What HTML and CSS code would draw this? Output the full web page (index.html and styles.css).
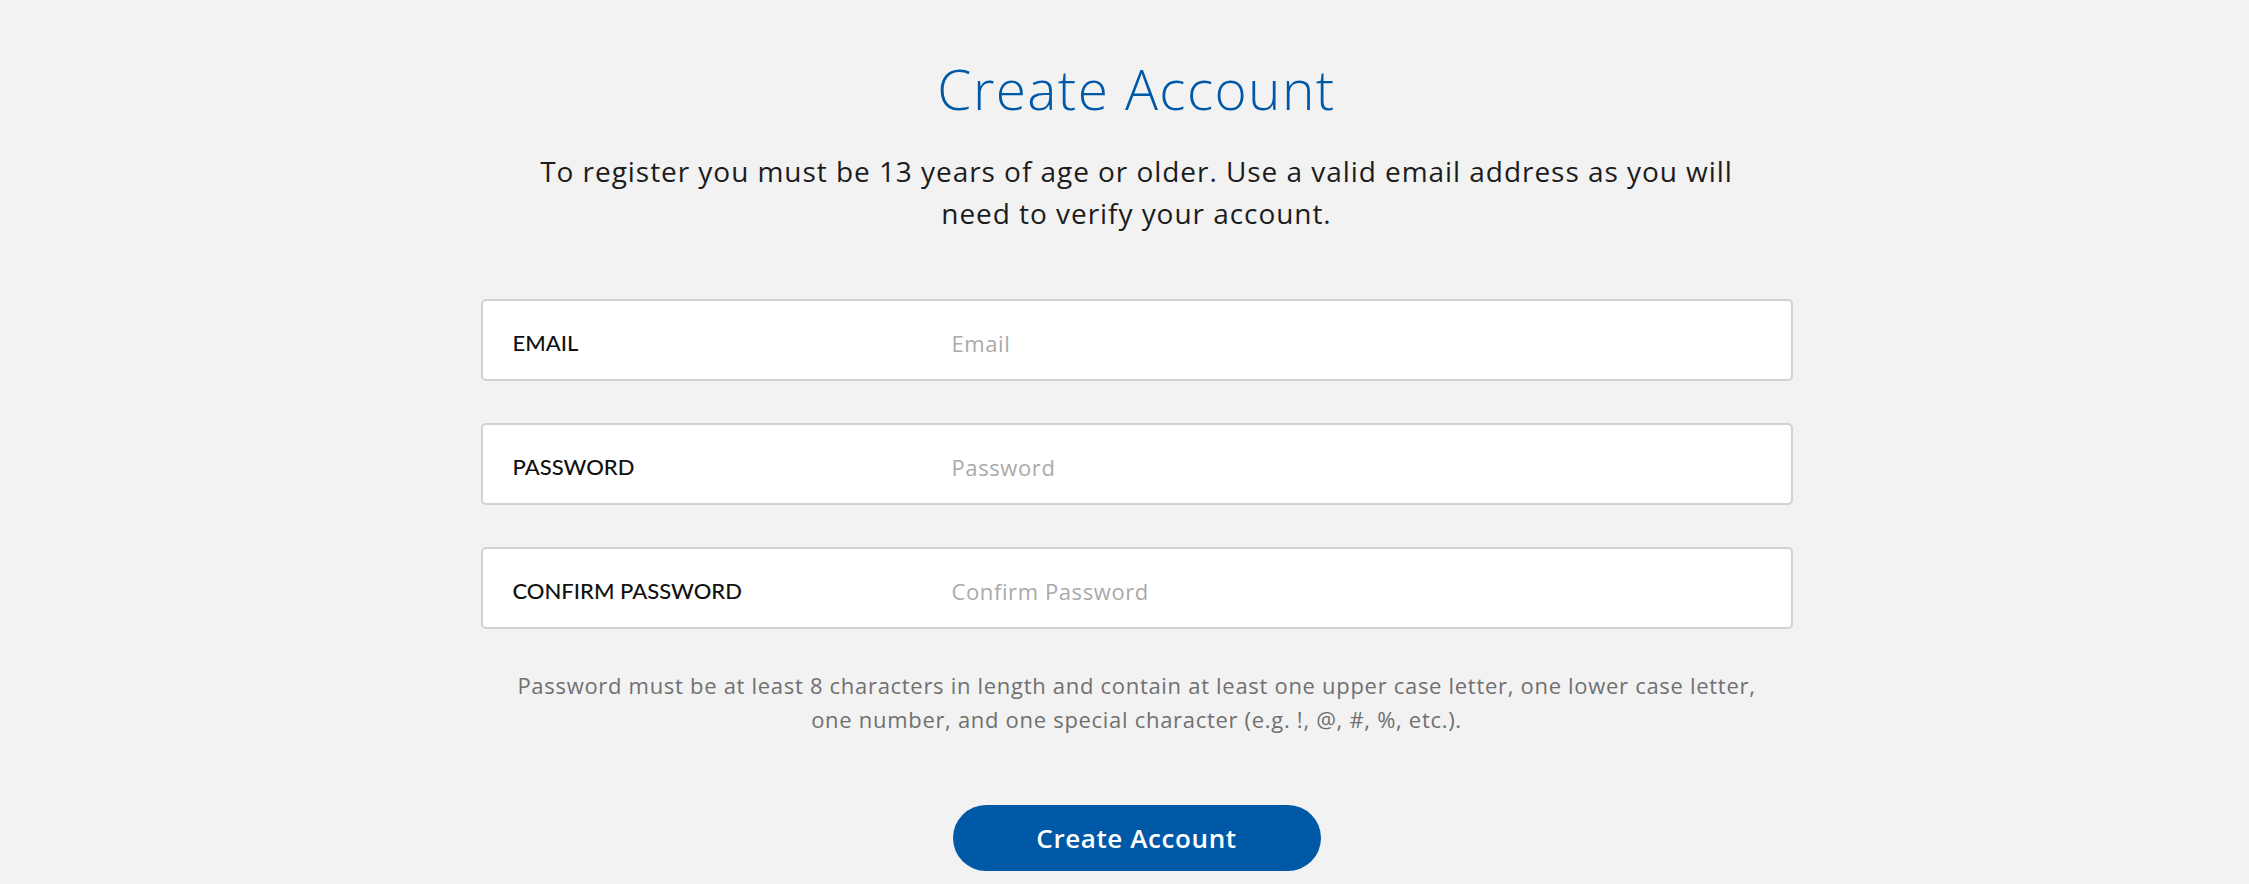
FILE: index.html
```html
<!DOCTYPE html>
<html lang="en">
<head>
<meta charset="utf-8">
<title>Create Account</title>
<link rel="stylesheet" href="styles.css">
</head>
<body>
<main class="page">
  <h1 class="title">Create Account</h1>
  <p class="intro">To register you must be 13 years of age or older. Use a valid email address as you will need to verify your account.</p>
  <form class="form">
    <label class="field">
      <span class="field-label">EMAIL</span>
      <input class="field-input" type="email" placeholder="Email">
    </label>
    <label class="field">
      <span class="field-label">PASSWORD</span>
      <input class="field-input" type="password" placeholder="Password">
    </label>
    <label class="field">
      <span class="field-label">CONFIRM PASSWORD</span>
      <input class="field-input" type="password" placeholder="Confirm Password">
    </label>
    <p class="hint">Password must be at least 8 characters in length and contain at least one upper case letter, one lower case letter, one number, and one special character (e.g. !, @, #, %, etc.).</p>
    <button class="submit" type="button">Create Account</button>
  </form>
</main>
</body>
</html>
```

FILE: styles.css
```css
* { box-sizing: border-box; }

html, body {
  margin: 0;
  padding: 0;
  background: #f2f2f2;
}

body {
  font-family: "Open Sans", Lato, "Liberation Sans", sans-serif;
  color: #1e1e1e;
  padding-left: 24px;
}

.page {
  display: flex;
  flex-direction: column;
  align-items: center;
  padding-top: 56px;
}

.title {
  margin: 0;
  font-size: 55px;
  line-height: 66px;
  font-weight: 300;
  letter-spacing: 1.4px;
  color: #0059a6;
}

.intro {
  margin: 28px 0 0;
  max-width: 1225px;
  font-size: 28px;
  line-height: 42px;
  font-weight: 400;
  letter-spacing: 0.95px;
  text-align: center;
  color: #1c1c1c;
}

.form {
  margin-top: 65px;
  width: 1312px;
  display: flex;
  flex-direction: column;
  align-items: center;
  gap: 42px;
}

.field {
  width: 100%;
  height: 82px;
  display: flex;
  align-items: center;
  background: #fff;
  border: 2px solid #d2d2d2;
  border-radius: 5px;
}

.field-label {
  flex: 0 0 469px;
  padding-left: 30px;
  padding-top: 4px;
  font-family: Lato, "Open Sans", sans-serif;
  font-size: 22px;
  font-weight: 500;
  color: #111;
}

.field-input {
  flex: 1;
  height: 100%;
  border: 0;
  outline: none;
  background: transparent;
  padding: 6px 0 0;
  font-family: inherit;
  font-size: 22px;
  letter-spacing: 0.6px;
  color: #333;
}

.field-input::placeholder {
  color: #aaa;
}

.hint {
  margin: -3px 0 0;
  max-width: 1262px;
  font-size: 22px;
  line-height: 34px;
  letter-spacing: 0.7px;
  text-align: center;
  color: #707070;
}

.submit {
  margin-top: 27px;
  width: 368px;
  height: 66px;
  border: 0;
  border-radius: 33px;
  background: #0059a6;
  color: #fff;
  font-family: inherit;
  font-size: 26px;
  font-weight: 600;
  letter-spacing: 0.6px;
  cursor: pointer;
}
```
